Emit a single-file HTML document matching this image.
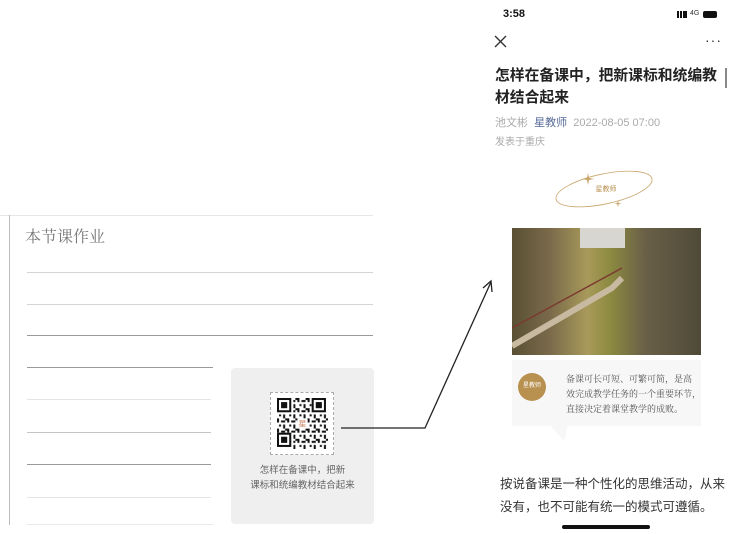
<!DOCTYPE html>
<html><head><meta charset="utf-8"><style>
*{margin:0;padding:0;box-sizing:border-box}
body{width:730px;height:534px;background:#fff;position:relative;overflow:hidden;font-family:"Liberation Sans","Noto Sans CJK SC",sans-serif}
.a{position:absolute}
.hl{position:absolute;height:1px;background:#c8c8c8}
</style></head><body>
<div class="a" style="left:0;top:215px;width:373px;height:1px;background:#e6e6e6"></div>
<div class="a" style="left:9px;top:215px;width:1px;height:310px;background:#bdbdbd"></div>
<div class="a" style="left:25px;top:224px;font-size:16px;color:#777;font-family:'Noto Serif CJK SC',serif">本节课作业</div>
<div class="hl" style="left:27px;top:272px;width:346px;background:#d4d4d4"></div>
<div class="hl" style="left:27px;top:304px;width:346px;background:#d4d4d4"></div>
<div class="hl" style="left:27px;top:335px;width:346px;background:#9a9a9a"></div>
<div class="hl" style="left:27px;top:367px;width:186px;background:#9a9a9a"></div>
<div class="hl" style="left:27px;top:399px;width:184px;background:#e4e4e4"></div>
<div class="hl" style="left:27px;top:432px;width:184px;background:#c4c4c4"></div>
<div class="hl" style="left:27px;top:464px;width:184px;background:#9a9a9a"></div>
<div class="hl" style="left:27px;top:497px;width:184px;background:#e4e4e4"></div>
<div class="hl" style="left:27px;top:524px;width:186px;background:#eaeaea"></div>
<div class="a" style="left:231px;top:368px;width:143px;height:156px;background:#efefef;border-radius:4px"></div>
<div class="a" style="left:270px;top:392px;width:64px;height:63px;background:#fff;border:1px dashed #aaa"></div>
<svg class="a" style="left:277px;top:398px" width="51" height="51" viewBox="0 0 25 25">
<defs><pattern id="p" width="5" height="5" patternUnits="userSpaceOnUse">
<rect x="0" y="0" width="1" height="2" fill="#111"/><rect x="2" y="1" width="2" height="1" fill="#111"/><rect x="3" y="3" width="1" height="2" fill="#111"/><rect x="1" y="3" width="1" height="1" fill="#111"/><rect x="4" y="0" width="1" height="1" fill="#111"/></pattern></defs>
<rect width="25" height="25" fill="url(#p)"/>
<g fill="#fff"><rect x="0" y="0" width="8" height="8"/><rect x="17" y="0" width="8" height="8"/><rect x="0" y="17" width="8" height="8"/></g>
<g fill="none" stroke="#111"><rect x=".5" y=".5" width="6" height="6"/><rect x="17.5" y=".5" width="6" height="6"/><rect x=".5" y="17.5" width="6" height="6"/></g>
<g fill="#111"><rect x="2" y="2" width="3" height="3"/><rect x="19" y="2" width="3" height="3"/><rect x="2" y="19" width="3" height="3"/></g>
<rect x="10" y="10" width="5" height="5" fill="#fff"/><text x="12.5" y="14" font-size="4" fill="#c86" text-anchor="middle">星</text>
</svg>
<div class="a" style="left:231px;top:463px;width:143px;text-align:center;font-size:9.5px;line-height:15px;color:#666">怎样在备课中，把新<br>课标和统编教材结合起来</div>
<svg class="a" style="left:0;top:0" width="730" height="534"><path d="M341 428 L425 428 L491 282" fill="none" stroke="#222" stroke-width="1.3"/><path d="M483 288 L491 281 L492 292" fill="none" stroke="#222" stroke-width="1.3"/></svg>
<div class="a" style="left:503px;top:8px;font-size:11px;font-weight:bold;color:#111">3:58</div>
<div class="a" style="left:677px;top:11px;width:10px;height:7px;background:linear-gradient(90deg,#111 2px,transparent 2px 3px,#111 3px 5px,transparent 5px 6px,#111 6px)"></div>
<div class="a" style="left:690px;top:10px;font-size:7px;color:#333">4G</div>
<div class="a" style="left:703px;top:11px;width:14px;height:7px;background:#111;border-radius:2px"></div>
<svg class="a" style="left:494px;top:35px" width="13" height="13"><path d="M1 1L12 12M12 1L1 12" stroke="#333" stroke-width="1.4"/></svg>
<div class="a" style="left:705px;top:32px;font-size:14px;color:#333;letter-spacing:1px">···</div>
<div class="a" style="left:495px;top:65px;white-space:nowrap;font-size:14.8px;font-weight:bold;line-height:22px;color:#222">怎样在备课中，把新课标和统编教<br>材结合起来</div>
<div class="a" style="left:725px;top:68px;width:2px;height:20px;background:#888"></div>
<div class="a" style="left:495px;top:114px;font-size:11px;color:#aaa;white-space:nowrap">池文彬 &nbsp;<span style="color:#576b95">星教师</span>&nbsp; 2022-08-05 07:00</div>
<div class="a" style="left:495px;top:133px;font-size:10px;color:#aaa">发表于重庆</div>
<svg class="a" style="left:550px;top:165px" width="110" height="50"><ellipse cx="54" cy="24" rx="49" ry="15" transform="rotate(-12 54 24)" fill="none" stroke="#c9a46a" stroke-width=".8"/><path d="M38 8l1 5 5 1-5 1-1 5-1-5-5-1 5-1z M68 35l.6 3 3 .6-3 .6-.6 3-.6-3-3-.6 3-.6z" fill="#c9a46a"/><text x="56" y="26" font-size="7" fill="#b8904f" text-anchor="middle">星教师</text></svg>
<div class="a" style="left:512px;top:228px;width:189px;height:127px;background:linear-gradient(90deg,#5a5035 0%,#7a6a4a 20%,#a89a5a 40%,#8c8a40 52%,#6a6048 70%,#4f4a38 100%)"></div>
<div class="a" style="left:580px;top:228px;width:45px;height:20px;background:#d8d6d0"></div>
<svg class="a" style="left:512px;top:228px" width="189" height="127"><path d="M0 118 L100 60 L110 50" stroke="#c8baa0" stroke-width="6" fill="none"/><path d="M0 100 L110 40" stroke="#7a3a30" stroke-width="1.5" fill="none"/></svg>
<div class="a" style="left:512px;top:360px;width:189px;height:66px;background:#f7f7f7"></div>
<svg class="a" style="left:550px;top:425px" width="20" height="18"><path d="M0 0L18 0L14 16Z" fill="#f7f7f7"/></svg>
<div class="a" style="left:518px;top:373px;width:28px;height:28px;border-radius:50%;background:#b8904f;color:#fff;font-size:6px;text-align:center;line-height:26px">星教师</div>
<div class="a" style="left:566px;top:371px;font-size:9px;line-height:15px;color:#555;font-family:'Noto Serif CJK SC',serif;white-space:nowrap">备课可长可短、可繁可简，是高<br>效完成教学任务的一个重要环节，<br>直接决定着课堂教学的成败。</div>
<div class="a" style="left:500px;top:473px;font-size:12.5px;line-height:23px;color:#333;white-space:nowrap">按说备课是一种个性化的思维活动，从来<br>没有，也不可能有统一的模式可遵循。</div>
<div class="a" style="left:562px;top:525px;width:88px;height:4px;border-radius:2px;background:#111"></div>
</body></html>
